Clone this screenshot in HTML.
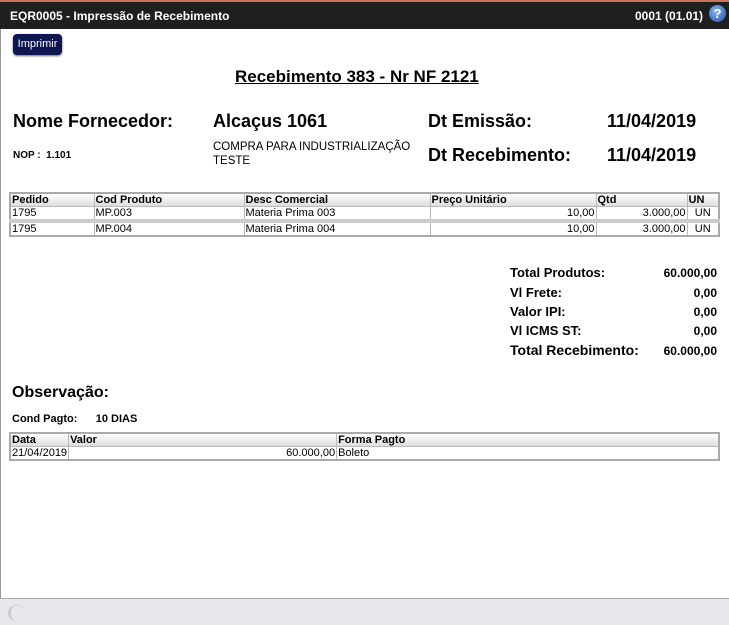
<!DOCTYPE html>
<html><head><meta charset="utf-8"><style>
*{margin:0;padding:0;box-sizing:border-box}
body{width:729px;height:625px;position:relative;background:#fff;font-family:"Liberation Sans",Arial,sans-serif;overflow:hidden;color:#000}
.a{position:absolute;white-space:nowrap}
.top{position:absolute;left:0;top:0;width:729px;height:2px;background:#c8735a}
.bar{position:absolute;left:0;top:2px;width:729px;height:27px;background:#1f1f1f;color:#fff;font-size:12px;font-weight:bold}
.lb{position:absolute;left:0;top:29px;width:1px;height:570px;background:#999}
.btn{position:absolute;left:13px;top:34px;width:49px;height:21px;background:#0d1650;color:#fff;border-radius:4px;font-size:11px;text-align:center;line-height:21px;box-shadow:0 1px 2px #666}
.h{font-size:18px;font-weight:bold}
table{position:absolute;border-collapse:collapse;font-size:11px;border:2px solid #aaa}
td,th{border:1px solid #bbb;padding:0 1px;height:13px;line-height:12px;text-align:left}
th{background:linear-gradient(#fff,#ddd);font-weight:bold}
.r{text-align:right}
.tot{font-size:13px;font-weight:bold}
.v{font-size:12px;font-weight:bold}
.foot{position:absolute;left:0;top:598px;width:729px;height:27px;background:#e8e8ec;border-top:1px solid #aaa}
</style></head><body>
<div class="top"></div>
<div class="bar"><span class="a" style="left:10px;top:7px">EQR0005 - Impressão de Recebimento</span><span class="a" style="left:635px;top:7px">0001 (01.01)</span>
<span class="a" style="left:709px;top:3px;width:17px;height:17px;border-radius:50%;background:radial-gradient(circle at 40% 35%,#8ab4f0,#1a4fa8);color:#fff;font-size:13px;text-align:center;line-height:17px">?</span></div>
<div class="lb"></div>
<div class="btn">Imprimir</div>
<div class="a" style="left:235px;top:67px;font-size:17px;font-weight:bold;text-decoration:underline">Recebimento 383 - Nr NF 2121</div>
<div class="a h" style="left:13px;top:111px">Nome Fornecedor:</div>
<div class="a h" style="left:213px;top:111px">Alcaçus 1061</div>
<div class="a h" style="left:428px;top:111px">Dt Emissão:</div>
<div class="a h" style="left:607px;top:111px">11/04/2019</div>
<div class="a" style="left:13px;top:150px;font-size:10px;font-weight:bold">NOP :&nbsp; 1.101</div>
<div class="a" style="left:213px;top:140px;font-size:11.5px;line-height:14px">COMPRA PARA INDUSTRIALIZAÇÃO<br>TESTE</div>
<div class="a h" style="left:428px;top:145px">Dt Recebimento:</div>
<div class="a h" style="left:607px;top:145px">11/04/2019</div>
<table style="left:9px;top:192px;width:711px">
<tr><th style="width:84px">Pedido</th><th style="width:150px">Cod Produto</th><th style="width:186px">Desc Comercial</th><th style="width:166px">Preço Unitário</th><th style="width:91px">Qtd</th><th>UN</th></tr>
<tr><td>1795</td><td>MP.003</td><td>Materia Prima 003</td><td class="r">10,00</td><td class="r">3.000,00</td><td style="text-align:center">UN</td></tr>
<tr style="border-top:4px solid #ccc"><td>1795</td><td>MP.004</td><td>Materia Prima 004</td><td class="r">10,00</td><td class="r">3.000,00</td><td style="text-align:center">UN</td></tr>
</table>
<div class="a tot" style="left:510px;top:265px">Total Produtos:</div><div class="a v" style="right:12px;top:266px">60.000,00</div>
<div class="a tot" style="left:510px;top:285px">Vl Frete:</div><div class="a v" style="right:12px;top:286px">0,00</div>
<div class="a tot" style="left:510px;top:304px">Valor IPI:</div><div class="a v" style="right:12px;top:305px">0,00</div>
<div class="a tot" style="left:510px;top:323px">Vl ICMS ST:</div><div class="a v" style="right:12px;top:324px">0,00</div>
<div class="a tot" style="left:510px;top:342px;font-size:14px">Total Recebimento:</div><div class="a v" style="right:12px;top:344px">60.000,00</div>
<div class="a" style="left:12px;top:384px;font-size:16px;font-weight:bold">Observação:</div>
<div class="a" style="left:12px;top:413px;font-size:11px;font-weight:bold">Cond Pagto:&nbsp;&nbsp;&nbsp;&nbsp;&nbsp; 10 DIAS</div>
<table style="left:9px;top:432px;width:711px">
<tr><th style="width:56px">Data</th><th style="width:268px">Valor</th><th>Forma Pagto</th></tr>
<tr><td>21/04/2019</td><td class="r">60.000,00</td><td>Boleto</td></tr>
</table>
<div class="foot"><span class="a" style="left:8px;top:5px;width:18px;height:18px;border-radius:50%;border-left:3px solid #ccc;border-top:2px solid #ddd"></span></div>
</body></html>
